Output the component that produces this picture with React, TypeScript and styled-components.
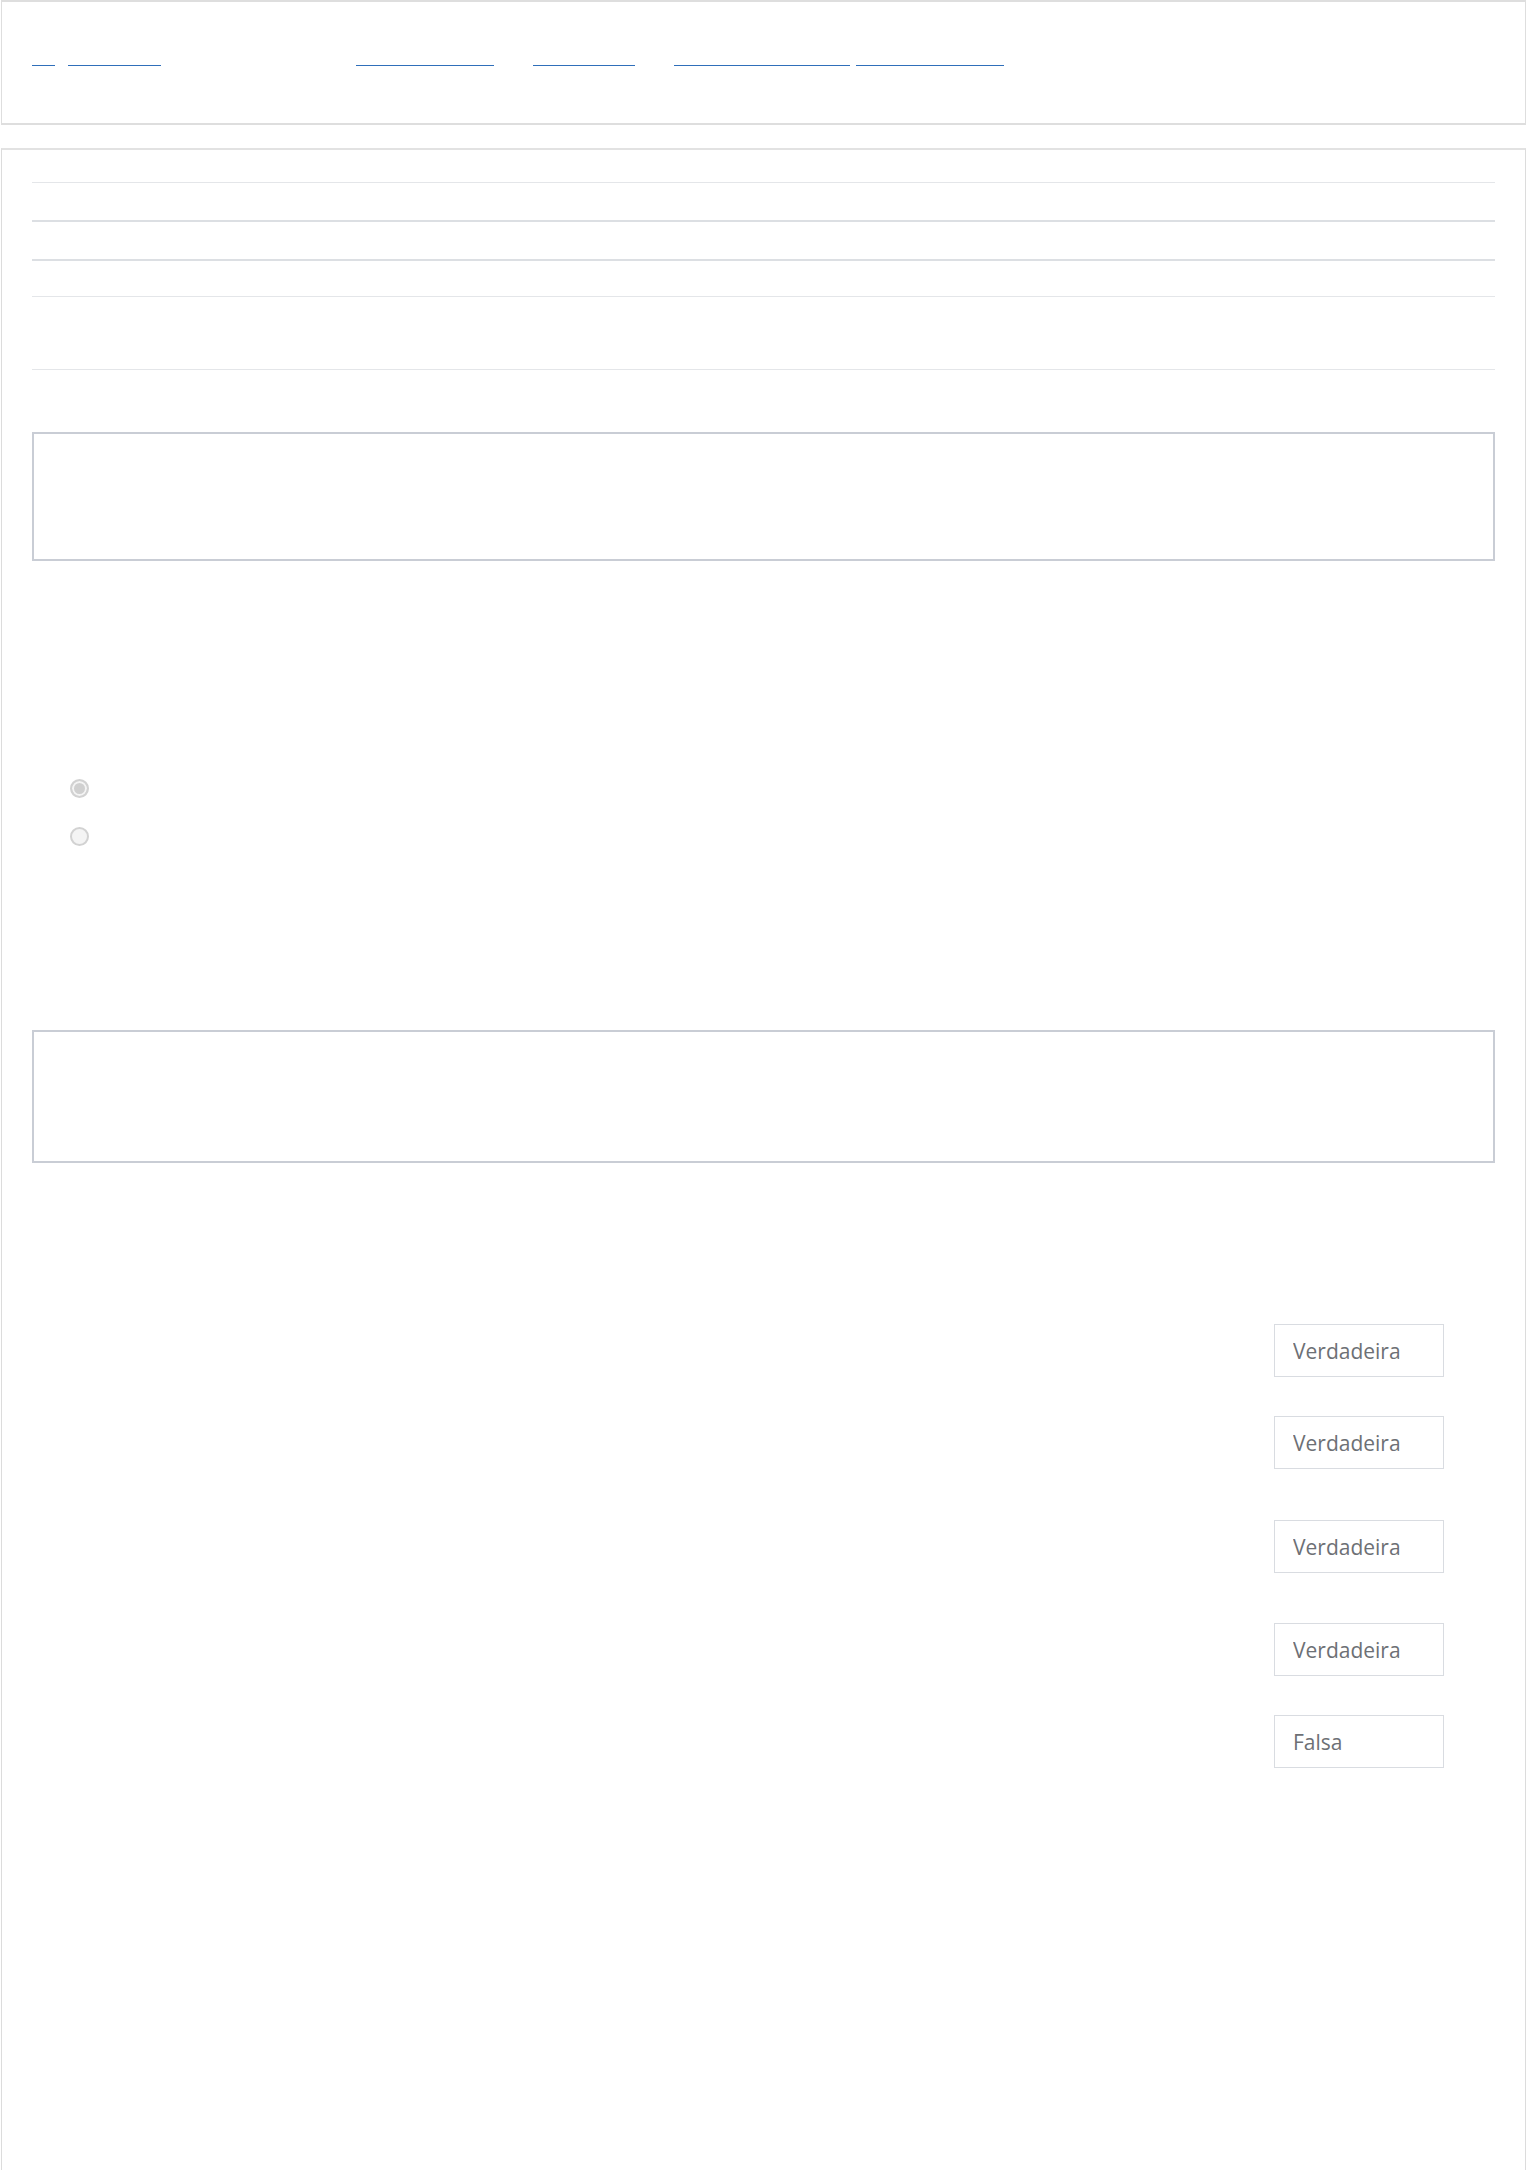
import React from "react";
import styled, { createGlobalStyle } from "styled-components";

const Global = createGlobalStyle`
  html, body { margin: 0; padding: 0; background: #ffffff; }
  body { font-family: "Open Sans", "Noto Sans", Arial, sans-serif; color: #ffffff; }
  * { box-sizing: border-box; }
`;

const Page = styled.div`
  padding: 0 1px;
`;

const Header = styled.header`
  height: 125px;
  border-style: solid;
  border-color: #dedede;
  border-width: 2px 1px;
  padding: 44px 30px 0;
  display: flex;
  align-items: flex-start;
`;

const NavLink = styled.a<{ $w: number; $ml: number }>`
  display: inline-block;
  width: ${(p) => p.$w}px;
  height: 20px;
  margin-left: ${(p) => p.$ml}px;
  border-bottom: 1px solid #2f6fba;
  color: transparent;
  font-size: 14px;
  line-height: 19px;
  overflow: hidden;
  white-space: nowrap;
  text-decoration: none;
`;

const Card = styled.main`
  margin-top: 23px;
  border-style: solid;
  border-color: #e2e2e2 #dcdcdc #dcdcdc;
  border-width: 2px 1px 0;
  padding: 32px 30px 520px;
`;

const SummaryTable = styled.div`
  display: flex;
  flex-direction: column;
  border-bottom: 1px solid #e4e6e9;
`;

const SummaryRow = styled.div<{ $h: number; $line: number }>`
  height: ${(p) => p.$h}px;
  border-top: ${(p) => p.$line}px solid ${(p) => (p.$line > 1 ? "#dcdfe3" : "#e4e6e9")};
  display: flex;
  align-items: center;
  color: #ffffff;
  font-size: 15px;
`;

const TextFrame = styled.div<{ $mt: number; $h: number }>`
  margin-top: ${(p) => p.$mt}px;
  height: ${(p) => p.$h}px;
  border: 2px solid #c9cdd5;
  background: #ffffff;
`;

const AnswerList = styled.div`
  margin-top: 218px;
  padding-left: 38px;
  display: flex;
  flex-direction: column;
  gap: 29px;
`;

const AnswerRow = styled.label`
  display: flex;
  align-items: center;
  gap: 12px;
  height: 19px;
  color: #ffffff;
  font-size: 15px;
`;

const Radio = styled.span<{ $checked?: boolean }>`
  width: 19px;
  height: 19px;
  border-radius: 50%;
  border: 2px solid #d2d2d2;
  background: ${(p) => (p.$checked ? "#d0d0d0" : "#f4f4f4")};
  box-shadow: ${(p) => (p.$checked ? "inset 0 0 0 2px #f4f4f4" : "none")};
  flex: none;
`;

const MatchList = styled.div`
  margin-top: 161px;
  display: flex;
  flex-direction: column;
`;

const MatchRow = styled.div<{ $mt: number }>`
  margin-top: ${(p) => p.$mt}px;
  display: flex;
  justify-content: flex-end;
  align-items: center;
  padding-right: 51px;
  color: #ffffff;
`;

const Select = styled.select`
  appearance: none;
  -webkit-appearance: none;
  width: 170px;
  height: 53px;
  border: 1px solid #d9dce1;
  border-radius: 0;
  background: #ffffff;
  padding: 0 0 0 18px;
  font-family: "Open Sans", "Noto Sans", Arial, sans-serif;
  font-size: 21px;
  color: #6d7075;
  outline: none;
`;

const links = [
  { w: 23, ml: 0, t: "«" },
  { w: 93, ml: 13, t: "Painel" },
  { w: 138, ml: 195, t: "Disciplinas" },
  { w: 102, ml: 39, t: "Tópicos" },
  { w: 176, ml: 39, t: "Questionário" },
  { w: 148, ml: 6, t: "Revisão" },
];

const rows = [
  { h: 38, line: 1, t: "Iniciado em" },
  { h: 39, line: 2, t: "Estado" },
  { h: 37, line: 2, t: "Concluída em" },
  { h: 73, line: 1, t: "Tempo empregado" },
];

const matches = [
  { mt: 0, v: "Verdadeira" },
  { mt: 39, v: "Verdadeira" },
  { mt: 51, v: "Verdadeira" },
  { mt: 50, v: "Verdadeira" },
  { mt: 39, v: "Falsa" },
];

export default function App() {
  return (
    <>
      <Global />
      <Page>
        <Header>
          {links.map((l, i) => (
            <NavLink key={i} href="#" $w={l.w} $ml={l.ml}>
              {l.t}
            </NavLink>
          ))}
        </Header>
        <Card>
          <SummaryTable>
            {rows.map((r, i) => (
              <SummaryRow key={i} $h={r.h} $line={r.line}>
                {r.t}
              </SummaryRow>
            ))}
          </SummaryTable>
          <TextFrame $mt={62} $h={129} />
          <AnswerList>
            <AnswerRow>
              <Radio $checked />
              Verdadeiro
            </AnswerRow>
            <AnswerRow>
              <Radio />
              Falso
            </AnswerRow>
          </AnswerList>
          <TextFrame $mt={184} $h={133} />
          <MatchList>
            {matches.map((m, i) => (
              <MatchRow key={i} $mt={m.mt}>
                <Select defaultValue={m.v}>
                  <option>Verdadeira</option>
                  <option>Falsa</option>
                </Select>
              </MatchRow>
            ))}
          </MatchList>
        </Card>
      </Page>
    </>
  );
}
